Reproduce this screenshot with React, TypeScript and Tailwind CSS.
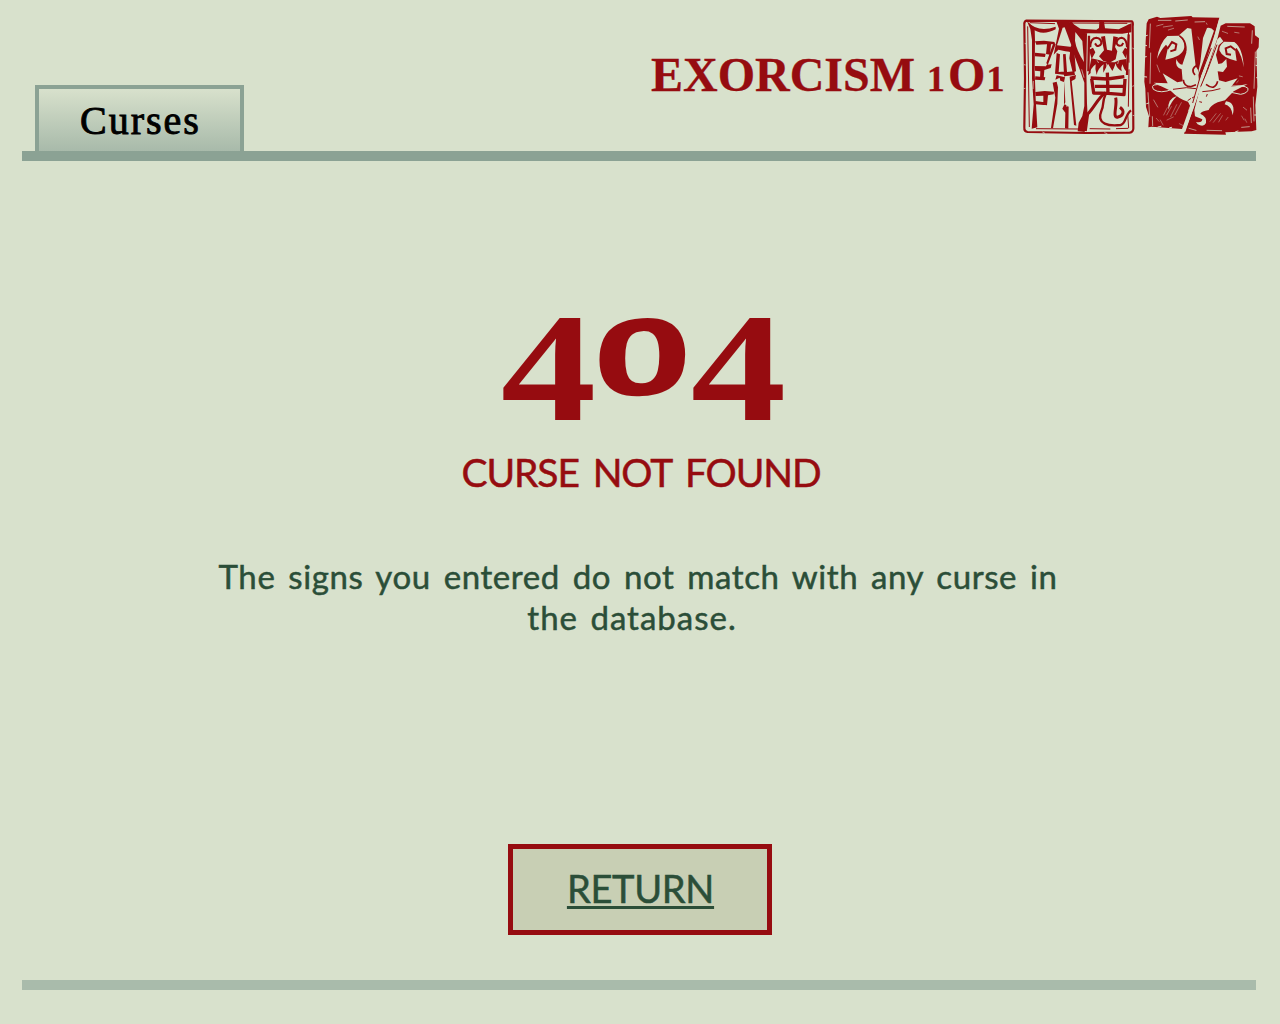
import React from "react";

function DemonSeal() {
  return (
    <svg viewBox="0 0 375 390" className="h-[130px] w-[125px] shrink-0" fill="none" stroke="#960c10" strokeLinejoin="round">
      <path d="M33 32L351 34Q355 37 353 49L355 355Q355 367 344 368L213 369L38 366Q27 365 28 351L30 205L28 44Q27 35 33 32Z" strokeWidth="6.5" />
      <path d="M38 49L43 351M340 44L342 158M342 178L340 290M338 311L341 354M63 356L190 357M224 356L286 357M303 356L340 355M44 38L120 41M169 39L337 40" strokeWidth="3" />
      <g fill="#960c10" stroke="none">
        <path d="M36 34L59 56L60 90L59 185L62 266L67 352L50 356L56 283L51 205L51 90L46 57Z" />
        <path d="M38 35Q69 69 122 50L122 58Q80 80 50 55Z" />
        <path d="M124 34L164 34L169 55L177 105L177 137L163 125L151 124L130 119L116 134L132 56Z" />
        <path fill="#d8e1cc" d="M143 53L149 52L171 111L126 106Z" />
        <path d="M60 94L87 92L119 96L117 102L108 103L105 134L93 132L96 103L64 104Z" />
        <path d="M60 128L92 131L90 141L60 139ZM59 168L93 169L95 164L110 163L107 174L88 180L86 205L75 207L76 184L60 182Z" />
        <path d="M61 199L91 202L89 211L60 209ZM61 246L89 243L117 245L116 253L99 256L96 286L85 284L85 257L62 258ZM61 273L88 277L85 285L61 283Z" />
        <path d="M116 96L122 103L98 166L94 159ZM113 218L125 215L129 232L127 281L114 355L108 354L121 263Z" />
        <path d="M125 129L135 133L131 186L156 184L154 195L120 191ZM144 133L152 132L156 186L178 184L180 195L148 199L147 281L161 290L160 356L150 355L151 308L142 296L151 277ZM168 105L177 113L183 184L173 187L163 145Z" />
        <path d="M125 196L150 202L147 216L136 212L134 203L121 209ZM164 200L183 195L181 207L170 213L184 347L177 345L166 226Z" />
        <path d="M164 36L172 36Q179 59 199 69L216 70L214 179L216 281L218 318L209 366L188 364L191 338L202 318L208 288L208 218L195 181L172 121L168 74Z" />
        <path fill="#d8e1cc" d="M181 66L202 93L207 156Q184 120 180 92Z" />
        <path d="M165 35L196 56L244 59L252 54L253 35L267 35L270 55L311 58L350 39L349 67L322 71L219 70L190 76Z" />
        <path fill="#d8e1cc" d="M195 47L251 44L251 53L210 56ZM271 46L333 43L314 55L276 54Z" />
      </g>
      <path d="M222 77L220 184M341 73L336 195" strokeWidth="7" />
      <g fill="none" strokeWidth="6">
        <path d="M226 112Q226 84 244 83Q260 86 259 100Q256 110 245 107L240 100M336 112Q335 85 320 83Q304 86 305 100Q309 110 320 106L325 99" />
      </g>
      <g fill="#960c10" stroke="none">
        <path d="M258 80L270 78L276 119L291 122L295 79L309 82L300 111L307 124L302 148L284 158L265 153L252 139L267 121Z" />
        <path d="M222 119L234 113L241 127L230 147ZM340 119L330 113L322 127L332 145Z" />
        <path d="M229 145L252 150L270 156L299 157L315 150L334 147L338 190Q326 178 322 163Q317 174 320 184Q304 174 302 160Q297 175 292 183L279 161L265 188Q263 176 266 163Q249 175 245 195Q239 177 242 163Q225 176 227 189L219 196Z" />
      </g>
      <path d="M227 204L277 207L328 200M230 206L236 249L279 250L327 254L330 207M277 188L279 250M240 229L327 229" strokeWidth="10" />
      <path d="M271 248C249 263 237 294 218 312L211 363" strokeWidth="9" />
      <path d="M272 252C259 281 269 282 259 303C242 344 284 349 317 345C334 341 329 315 348 301" strokeWidth="7" />
      <path d="M302 263C308 285 290 326 309 321C325 318 330 303 315 292" strokeWidth="9" />
      <g stroke="#d8e1cc" strokeWidth="2">
        <path d="M29 100l5 2M27 164l5 1M26 236l5-1M352 114l5 3M352 229l5-2M353 316l5 1M82 366l8 4M268 368l9 3" />
        <path d="M275 89L281 120M246 151l5 8M274 160l2 14M311 152l-3 10M200 178l7 25M154 269l2 22M55 213l-1 24" />
      </g>
    </svg>
  );
}

function BeastSeal() {
  return (
    <svg viewBox="0 0 375 390" className="h-[130px] w-[125px] shrink-0" fill="#960c10">
      <path d="M32 28L57 20L67 24L160 18L164 22L244 23L231 70L195 181L132 357L41 350L31 352L33 319L24 291L22 236L19 215L23 93L26 40Z" />
      <path d="M248 47L263 40L336 40L350 49L351 76L363 85L362 112L355 123L358 230L352 285L355 360L341 364L262 367L264 374L138 371L166 297L205 182L239 83Z" />
      <g fill="#d8e1cc">
        <path d="M57 147Q64 100 88 78L123 77Q141 92 139 112Q134 141 82 149L90 112L84 104Q68 120 57 147Z" />
        <path d="M123 76L148 54L160 56L173 169L180 180L184 224L158 291L150 275Q122 267 98 242L47 218L89 220L74 190L118 217L134 214L131 178Q110 172 115 147Q121 163 133 164L145 128Q150 96 123 76Z" />
        <path d="M207 54Q219 51 228 62L185 184L178 200L187 157L195 84Z" />
        <path d="M317 172Q315 115 289 96L258 95Q242 108 244 121Q253 144 296 153L291 118L296 114Q312 137 317 172Z" />
        <path d="M238 88L246 80L256 94L242 106L234 135L241 162L252 160L265 147L267 170L255 186L239 184L243 211L263 216L299 205L279 231L329 222L287 244L261 271L239 277Q216 288 212 300Q190 304 187 311Q207 320 204 339Q197 353 179 343L174 336Q192 340 193 328L171 319L169 301L184 241L210 176Z" />
        <path d="M91 299Q88 266 117 258Q99 275 91 299ZM264 274Q294 278 284 316Q280 287 260 283Z" />
      </g>
      <g fill="none" stroke="#960c10" strokeWidth="6">
        <path d="M88 117L102 96L115 103L112 119L97 124M292 120L278 109L263 115L266 132L279 134" />
      </g>
      <g fill="none" stroke="#d8e1cc" strokeWidth="3">
        <path d="M75 226Q34 218 46 238Q67 253 105 237L140 230M247 232Q321 222 330 235Q332 249 308 253L270 245" />
        <path d="M246 29L216 138L139 365" strokeWidth="6" />
        <path d="M228 104L181 223L151 304" strokeWidth="2" />
      </g>
      <g fill="none" stroke="#960c10">
        <path d="M136 209Q137 229 158 230L174 224M180 164Q155 176 171 195M204 223Q231 244 239 214" strokeWidth="5" />
        <path d="M220 114L188 195L164 279M237 104L208 182L188 230M105 238L145 233L174 236M193 245L222 242L247 236M162 264l9-5M184 275l8 2M205 260l3-8M149 272l10-7" strokeWidth="3" />
        <path d="M124 77Q146 92 143 120L136 137" strokeWidth="5" />
      </g>
      <g fill="none" stroke="#d8e1cc" strokeLinecap="round">
        <path d="M37 42L34 113M38 129L36 220M30 248L35 319M43 320L44 347M352 126L348 235M346 261L348 333M343 62L341 100M338 294L340 338M61 31L99 31M113 33L148 30M171 36L200 35M269 49L319 51M207 361L251 362M153 355L174 361M311 352L334 350" strokeWidth="2" />
        <path d="M77 315L88 293M86 315L100 290M98 320L116 284M111 314L130 278M87 330L106 321M216 334L234 311M226 337L247 311M242 336L253 317M264 330L270 322M55 325L63 334M67 330L75 345M124 341l10 5M311 318l7 12M321 327l5 10" strokeWidth="1.2" />
        <path d="M56 48l19-5M76 51l27-4M91 60l16-5M253 64l16 6M290 67l13 2M57 165l8 21M304 198l9 2M296 218l5-5M47 270l12 21M316 292l10 8M180 81l4 8M205 39l2 4" strokeWidth="1.5" />
        <path d="M22 78l6-2M19 105l7 2M20 141l5-1M18 200l8 1M26 281l6-2M354 142l8 2M354 166l5 1M356 203l5 0M350 315l7 0M60 351l9-2M95 353l6-1M293 365l7-2" strokeWidth="3" />
      </g>
    </svg>
  );
}

export default function App() {
  return (
    <div className="flex h-[1024px] w-[1280px] flex-col overflow-hidden bg-[#d8e1cc] text-[#960c10]">
      <header className="ml-[22px] mr-6 flex h-[161px] items-end justify-between border-b-[10px] border-[#8ba294]">
        <a href="#" className="ml-[13px] flex h-[66px] w-[209px] items-center justify-center border-4 border-b-0 border-[#8ba294] bg-gradient-to-b from-[#d8e1cc] to-[#a8baaa] pl-0.5 pt-0.5 font-['Liberation_Serif',serif] text-[40px] leading-none text-black no-underline [-webkit-text-stroke:0.9px_black]">
          <span className="tracking-[2px]">Curses</span>
        </a>
        <div className="-mr-[7px] mb-[11px] flex items-center">
          <h1 className="mr-[9px] flex w-[355px] items-baseline whitespace-pre font-['Liberation_Serif',serif] text-[48px] font-bold leading-none [-webkit-text-stroke:0.3px_#960c10]">
            <span>EXORCISM </span><span className="mr-[3px] text-[36px]">1</span><span>O</span><span className="ml-px text-[36px]">1</span>
          </h1>
          <DemonSeal />
          <div className="-ml-[2px] flex"><BeastSeal /></div>
        </div>
      </header>
      <main className="flex grow flex-col items-center font-[Lato,sans-serif]">
        <h2 className="mt-[128px] flex h-[150px] items-center justify-center font-bold leading-none">
          <span className="flex w-[95px] translate-x-[3px] translate-y-[4px] justify-center font-['Liberation_Serif',serif] text-[154px]"><span className="inline-block scale-x-[1.24]">4</span></span>
          <span className="flex w-[95px] translate-x-[2px] -translate-y-[10px] justify-center font-['Open_Sans',sans-serif] text-[106px]"><span className="inline-block -skew-y-6 scale-x-[1.62]">0</span></span>
          <span className="flex w-[95px] translate-x-[3px] translate-y-[4px] justify-center font-['Liberation_Serif',serif] text-[154px]"><span className="inline-block scale-x-[1.24]">4</span></span>
        </h2>
        <p className="mt-[9px] whitespace-nowrap pl-0.5 text-[39px] leading-[48px] tracking-[-1.1px] [word-spacing:5px] [-webkit-text-stroke:0.5px_#960c10]">CURSE NOT FOUND</p>
        <p className="mt-[60px] flex flex-col items-center whitespace-nowrap text-[33px] leading-[41px] text-[#2b4e38] [-webkit-text-stroke:0.5px_#2b4e38]">
          <span className="mr-1 tracking-[0.6px] [word-spacing:3.8px]">The signs you entered do not match with any curse in</span>
          <span className="mr-4 tracking-[1px] [word-spacing:3px]">the database.</span>
        </p>
        <a href="#" className="mt-auto mb-[45px] flex h-[91px] w-[264px] items-center justify-center border-[5px] border-[#960c10] bg-[#c8cfb4] pb-1 pl-px text-[38px] leading-none tracking-[-0.3px] text-[#2b4e38] underline decoration-[3px] underline-offset-[3px] [-webkit-text-stroke:0.5px_#2b4e38]">RETURN</a>
      </main>
      <footer className="mb-[34px] ml-[22px] mr-6 h-[10px] shrink-0 bg-[#a9bbab]" />
    </div>
  );
}
